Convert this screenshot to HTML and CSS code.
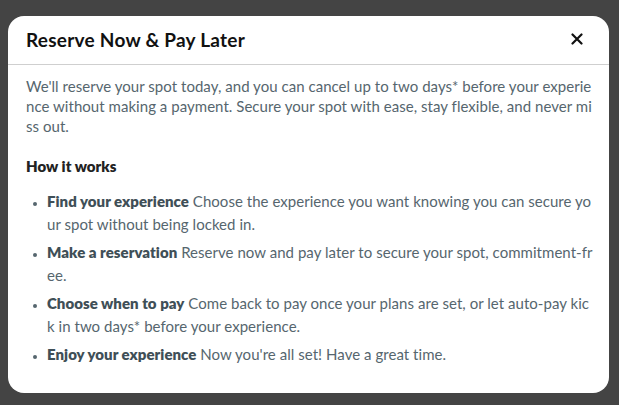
FILE: index.html
```html
<!DOCTYPE html>
<html lang="en">
<head>
<meta charset="utf-8">
<link rel="stylesheet" href="styles.css">
</head>
<body>
<div class="overlay">
  <div class="modal">
    <div class="modal-header">
      <h2 class="modal-title">Reserve Now &amp; Pay Later</h2>
      <button class="close-btn" aria-label="Close">
        <svg width="12" height="12" viewBox="0 0 12 12"><path d="M1.5 1.5 L10.5 10.5 M10.5 1.5 L1.5 10.5" stroke="#111" stroke-width="2.2" stroke-linecap="round"/></svg>
      </button>
    </div>
    <div class="modal-body">
      <p class="intro">We'll reserve your spot today, and you can cancel up to two days* before your experience without making a payment. Secure your spot with ease, stay flexible, and never miss out.</p>
      <h3 class="section-title">How it works</h3>
      <ul class="steps">
        <li><strong>Find your experience</strong> Choose the experience you want knowing you can secure your spot without being locked in.</li>
        <li><strong>Make a reservation</strong> Reserve now and pay later to secure your spot, commitment-free.</li>
        <li><strong>Choose when to pay</strong> Come back to pay once your plans are set, or let auto-pay kick in two days* before your experience.</li>
        <li><strong>Enjoy your experience</strong> Now you're all set! Have a great time.</li>
      </ul>
    </div>
  </div>
</div>
</body>
</html>
```

FILE: styles.css
```css
* { box-sizing: border-box; }
html, body { margin: 0; padding: 0; }
body {
  width: 619px;
  height: 405px;
  background: #444444;
  font-family: Lato, "Open Sans", sans-serif;
  overflow: hidden;
}
.overlay {
  padding: 16px 10px 0 8px;
}
.modal {
  background: #ffffff;
  border-radius: 16px;
  width: 601px;
  height: 377px;
  overflow: hidden;
}
.modal-header {
  display: flex;
  align-items: center;
  justify-content: space-between;
  height: 49px;
  padding: 0 25px 2px 18px;
  border-bottom: 1px solid #cfcfcf;
}
.modal-title {
  margin: 0;
  font-size: 19px;
  letter-spacing: 0.25px;
  font-weight: 700;
  color: #111111;
}
.close-btn {
  background: none;
  border: 0;
  padding: 0;
  width: 14px;
  height: 14px;
  display: flex;
  align-items: center;
  justify-content: center;
}
.modal-body {
  padding: 11px 15px 0 18px;
  color: #56666e;
  font-size: 15px;
  letter-spacing: 0.04px;
}
.intro {
  margin: 0;
  line-height: 20px;
  word-break: break-all;
}
.section-title {
  margin: 20px 0 0 0;
  font-size: 15px;
  line-height: 20px;
  font-weight: 800;
  color: #222222;
}
.steps {
  margin: 14px 0 0 0;
  padding: 0 0 0 21px;
  word-break: break-all;
}
.steps li {
  line-height: 22.5px;
  margin-bottom: 6px;
}
.steps li::marker {
  font-size: 11px;
}
.steps strong {
  font-weight: 800;
  color: #3f4f57;
}
```
